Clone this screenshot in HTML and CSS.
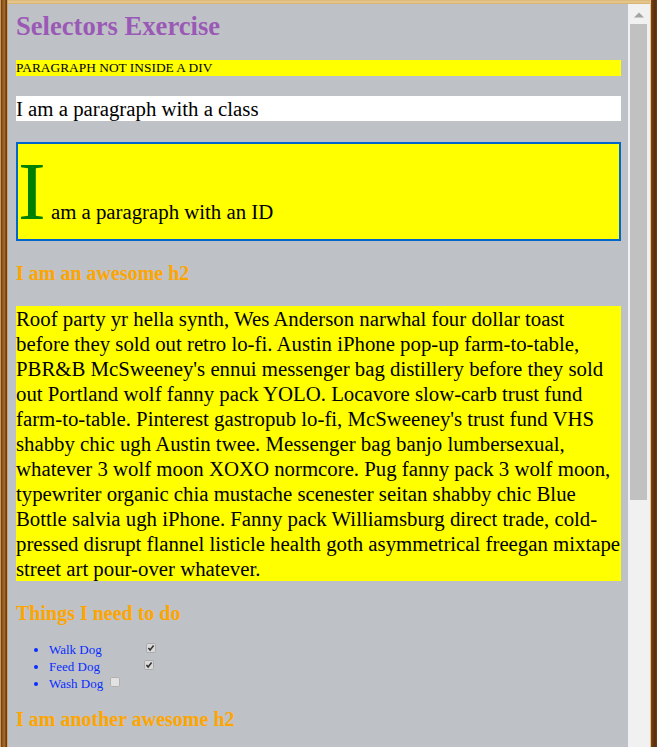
FILE: index.html
```html
<!DOCTYPE html>
<html lang="en">
<head>
<meta charset="utf-8">
<title>Selectors Exercise</title>
<link rel="stylesheet" href="styles.css">
</head>
<body>
<div class="frame">
  <main class="page">
    <h1 class="title">Selectors Exercise</h1>
    <p class="plain">PARAGRAPH NOT INSIDE A DIV</p>
    <div class="group">
      <p class="classy">I am a paragraph with a class</p>
      <p class="with-id" id="intro">I am a paragraph with an ID</p>
      <h2 class="sub">I am an awesome h2</h2>
      <p class="lorem">Roof party yr hella synth, Wes Anderson narwhal four dollar toast before they sold out retro lo-fi. Austin iPhone pop-up farm-to-table, PBR&amp;B McSweeney's ennui messenger bag distillery before they sold out Portland wolf fanny pack YOLO. Locavore slow-carb trust fund farm-to-table. Pinterest gastropub lo-fi, McSweeney's trust fund VHS shabby chic ugh Austin twee. Messenger bag banjo lumbersexual, whatever 3 wolf moon XOXO normcore. Pug fanny pack 3 wolf moon, typewriter organic chia mustache scenester seitan shabby chic Blue Bottle salvia ugh iPhone. Fanny pack Williamsburg direct trade, cold-pressed disrupt flannel listicle health goth asymmetrical freegan mixtape street art pour-over whatever.</p>
      <h2 class="sub">Things I need to do</h2>
      <ul class="todo">
        <li class="todo-item">Walk Dog <span class="box box-checked" role="checkbox" aria-checked="true"><svg viewBox="0 0 10 10" width="10" height="10"><rect x="0.5" y="0.5" width="9" height="9" rx="1.3" fill="#dadada" stroke="#aaaaaa"/><path d="M2.4 5 L4.1 6.9 L7.6 2.6" fill="none" stroke="#333333" stroke-width="1.6"/></svg></span></li>
        <li class="todo-item">Feed Dog <span class="box box-checked" role="checkbox" aria-checked="true"><svg viewBox="0 0 10 10" width="10" height="10"><rect x="0.5" y="0.5" width="9" height="9" rx="1.3" fill="#dadada" stroke="#aaaaaa"/><path d="M2.4 5 L4.1 6.9 L7.6 2.6" fill="none" stroke="#333333" stroke-width="1.6"/></svg></span></li>
        <li class="todo-item">Wash Dog <span class="box" role="checkbox" aria-checked="false"><svg viewBox="0 0 10 10" width="10" height="10"><rect x="0.5" y="0.5" width="9" height="9" rx="1.3" fill="#e2e2e2" stroke="#b0b0b0"/></svg></span></li>
      </ul>
      <h2 class="sub sub-last">I am another awesome h2</h2>
    </div>
  </main>
  <div class="scrollbar">
    <svg class="arrow" viewBox="0 0 10 6" width="10" height="6"><path d="M0 5.5 L5 0.5 L10 5.5 Z" fill="#a3a3a3"/></svg>
    <div class="thumb"></div>
  </div>
</div>
</body>
</html>
```
FILE: styles.css
```css
html, body {
  margin: 0;
  padding: 0;
}

body {
  width: 657px;
  height: 747px;
  overflow: hidden;
}

.frame {
  box-sizing: border-box;
  display: flex;
  width: 657px;
  height: 747px;
  padding: 4px 7px 0 8px;
  background:
    linear-gradient(to right, #c99a55 0, #c99a55 1px, #6a3c12 1px, #9a5e22 3px, #a86a2c 5px, #5e320e 6px, #7a4a1c 7px, #cfa868 7px, #cfa868 8px) left top / 8px 100% no-repeat,
    linear-gradient(to right, #e2c48c 0, #e2c48c 1px, #7c4616 1px, #6a3810 3px, #5a2e0c 5px, #703e14 7px) right top / 7px 100% no-repeat,
    linear-gradient(to bottom, #d9b572 0, #e7cb95 2px, #d6ae6a 4px);
}

.page {
  flex: 0 0 620px;
  box-sizing: border-box;
  height: 743px;
  overflow: hidden;
  padding: 0 7px 0 8px;
  background: #bec2c6;
  font-family: "Liberation Serif", "Times New Roman", serif;
  font-size: 13px;
  color: #000;
}

.title {
  margin: 7px 0 19px;
  font-size: 26.6px;
  line-height: 30px;
  font-weight: bold;
  color: #9b59b6;
}

.plain {
  margin: 0 0 20px;
  font-size: 13.4px;
  line-height: 16px;
  background: #ffff00;
}

.group {
  display: flow-root;
}

.classy {
  margin: 0 0 21px;
  font-size: 20.8px;
  line-height: 25px;
  background: #ffffff;
}

.with-id {
  margin: 0;
  font-size: 20.8px;
  line-height: 25px;
  background: #ffff00;
  border: 2px solid #0066cc;
}

.with-id::first-letter {
  font-size: 4em;
  line-height: 95px;
  color: #008000;
}

.sub {
  margin: 21px 0 0;
  font-size: 20px;
  line-height: 23px;
  font-weight: bold;
  color: #ffa500;
}

.sub-last {
  margin-top: 16px;
}

.lorem {
  margin: 21px 0 0;
  font-size: 20.8px;
  line-height: 25px;
  background: #ffff00;
}

.todo {
  margin: 16px 0 0;
  padding: 0 0 0 33px;
  color: #0a2cff;
}

.todo-item {
  font-size: 13px;
  line-height: 17px;
  height: 17px;
}

.box {
  display: inline-block;
  width: 10px;
  height: 10px;
  margin-left: 4px;
  vertical-align: 1px;
}

.box svg {
  display: block;
}

.box-checked {
  margin-left: 41px;
}

.scrollbar {
  flex: 0 0 22px;
  display: flex;
  flex-direction: column;
  background: #f1f1f1;
}

.arrow {
  display: block;
  margin: 8px 0 0 6px;
}

.thumb {
  margin: 6px 3px 0 2px;
  height: 476px;
  background: #c1c1c1;
}
```
